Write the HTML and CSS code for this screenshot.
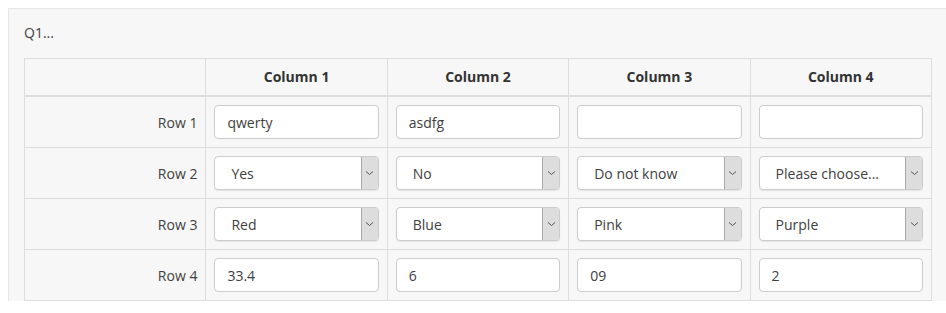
FILE: index.html
```html
<!DOCTYPE html>
<html lang="en">
<head>
  <meta charset="UTF-8" />
  <meta name="viewport" content="width=device-width, initial-scale=1.0"/>
  <title>Q1 matrix</title>
  <link rel="stylesheet" href="styles.css">
</head>
<body>
  <div class="question">
    <div class="question-title">Q1...</div>
    <table class="matrix">
      <thead>
        <tr>
          <th></th>
          <th>Column 1</th>
          <th>Column 2</th>
          <th>Column 3</th>
          <th>Column 4</th>
        </tr>
      </thead>
      <tbody>
        <tr>
          <td class="row-label">Row 1</td>
          <td><input type="text" class="field" value="qwerty"></td>
          <td><input type="text" class="field" value="asdfg"></td>
          <td><input type="text" class="field" value=""></td>
          <td><input type="text" class="field" value=""></td>
        </tr>
        <tr>
          <td class="row-label">Row 2</td>
          <td><div class="select-wrap"><select class="field select"><option>Yes</option></select><span class="arrow"><svg width="9" height="6" viewBox="0 0 9 6"><path d="M1 1.5 L4.5 4.5 L8 1.5" fill="none" stroke="#555" stroke-width="1"/></svg></span></div></td>
          <td><div class="select-wrap"><select class="field select"><option>No</option></select><span class="arrow"><svg width="9" height="6" viewBox="0 0 9 6"><path d="M1 1.5 L4.5 4.5 L8 1.5" fill="none" stroke="#555" stroke-width="1"/></svg></span></div></td>
          <td><div class="select-wrap"><select class="field select"><option>Do not know</option></select><span class="arrow"><svg width="9" height="6" viewBox="0 0 9 6"><path d="M1 1.5 L4.5 4.5 L8 1.5" fill="none" stroke="#555" stroke-width="1"/></svg></span></div></td>
          <td><div class="select-wrap"><select class="field select"><option>Please choose...</option></select><span class="arrow"><svg width="9" height="6" viewBox="0 0 9 6"><path d="M1 1.5 L4.5 4.5 L8 1.5" fill="none" stroke="#555" stroke-width="1"/></svg></span></div></td>
        </tr>
        <tr>
          <td class="row-label">Row 3</td>
          <td><div class="select-wrap"><select class="field select"><option>Red</option></select><span class="arrow"><svg width="9" height="6" viewBox="0 0 9 6"><path d="M1 1.5 L4.5 4.5 L8 1.5" fill="none" stroke="#555" stroke-width="1"/></svg></span></div></td>
          <td><div class="select-wrap"><select class="field select"><option>Blue</option></select><span class="arrow"><svg width="9" height="6" viewBox="0 0 9 6"><path d="M1 1.5 L4.5 4.5 L8 1.5" fill="none" stroke="#555" stroke-width="1"/></svg></span></div></td>
          <td><div class="select-wrap"><select class="field select"><option>Pink</option></select><span class="arrow"><svg width="9" height="6" viewBox="0 0 9 6"><path d="M1 1.5 L4.5 4.5 L8 1.5" fill="none" stroke="#555" stroke-width="1"/></svg></span></div></td>
          <td><div class="select-wrap"><select class="field select"><option>Purple</option></select><span class="arrow"><svg width="9" height="6" viewBox="0 0 9 6"><path d="M1 1.5 L4.5 4.5 L8 1.5" fill="none" stroke="#555" stroke-width="1"/></svg></span></div></td>
        </tr>
        <tr>
          <td class="row-label">Row 4</td>
          <td><input type="text" class="field" value="33.4"></td>
          <td><input type="text" class="field" value="6"></td>
          <td><input type="text" class="field" value="09"></td>
          <td><input type="text" class="field" value="2"></td>
        </tr>
      </tbody>
    </table>
  </div>
</body>
</html>
```

FILE: styles.css
```css
body {
  font-family: "Open Sans", "Liberation Sans", sans-serif;
  margin: 8px 0 0 8px;
  padding: 0;
  color: #404040;
  overflow: hidden;
}
.question {
  background: #f7f7f7;
  border-top: 1px solid #e6e6e6;
  border-left: 1px solid #e6e6e6;
  padding: 14px 0 0 15px;
  width: 960px;
}
.question-title {
  font-size: 14px;
  line-height: 20px;
  margin-bottom: 15px;
}
/* Matrix table */
.matrix {
  border-collapse: collapse;
  width: 908px;
  table-layout: fixed;
  font-size: 14px;
}
.matrix th,
.matrix td {
  border: 1px solid #dddddd;
  padding: 8px;
  vertical-align: middle;
}
.matrix th {
  font-size: 14px;
  font-weight: bold;
  color: #333;
  line-height: 20px;
  text-align: center;
  border-bottom-width: 2px;
}
.matrix .row-label {
  text-align: right;
  padding-right: 8px;
}
.field {
  display: block;
  box-sizing: border-box;
  width: 100%;
  height: 34px;
  margin: 0;
  padding: 0 12px;
  border: 1px solid #cccccc;
  border-radius: 4px;
  background: #fff;
  font-family: "Open Sans", "Liberation Sans", sans-serif;
  font-size: 14px;
  color: #404040;
  outline: none;
}
/* Select with custom arrow box */
.select-wrap {
  position: relative;
}
.select {
  -webkit-appearance: none;
  appearance: none;
  padding-left: 16px;
  box-shadow: 0 1px 1px rgba(0, 0, 0, 0.08);
}
.arrow {
  position: absolute;
  top: 1px;
  right: 1px;
  bottom: 1px;
  width: 16px;
  background: #dddddd;
  border-left: 1px solid #a9a9a9;
  border-radius: 0 3px 3px 0;
  display: flex;
  align-items: center;
  justify-content: center;
  pointer-events: none;
}
```
